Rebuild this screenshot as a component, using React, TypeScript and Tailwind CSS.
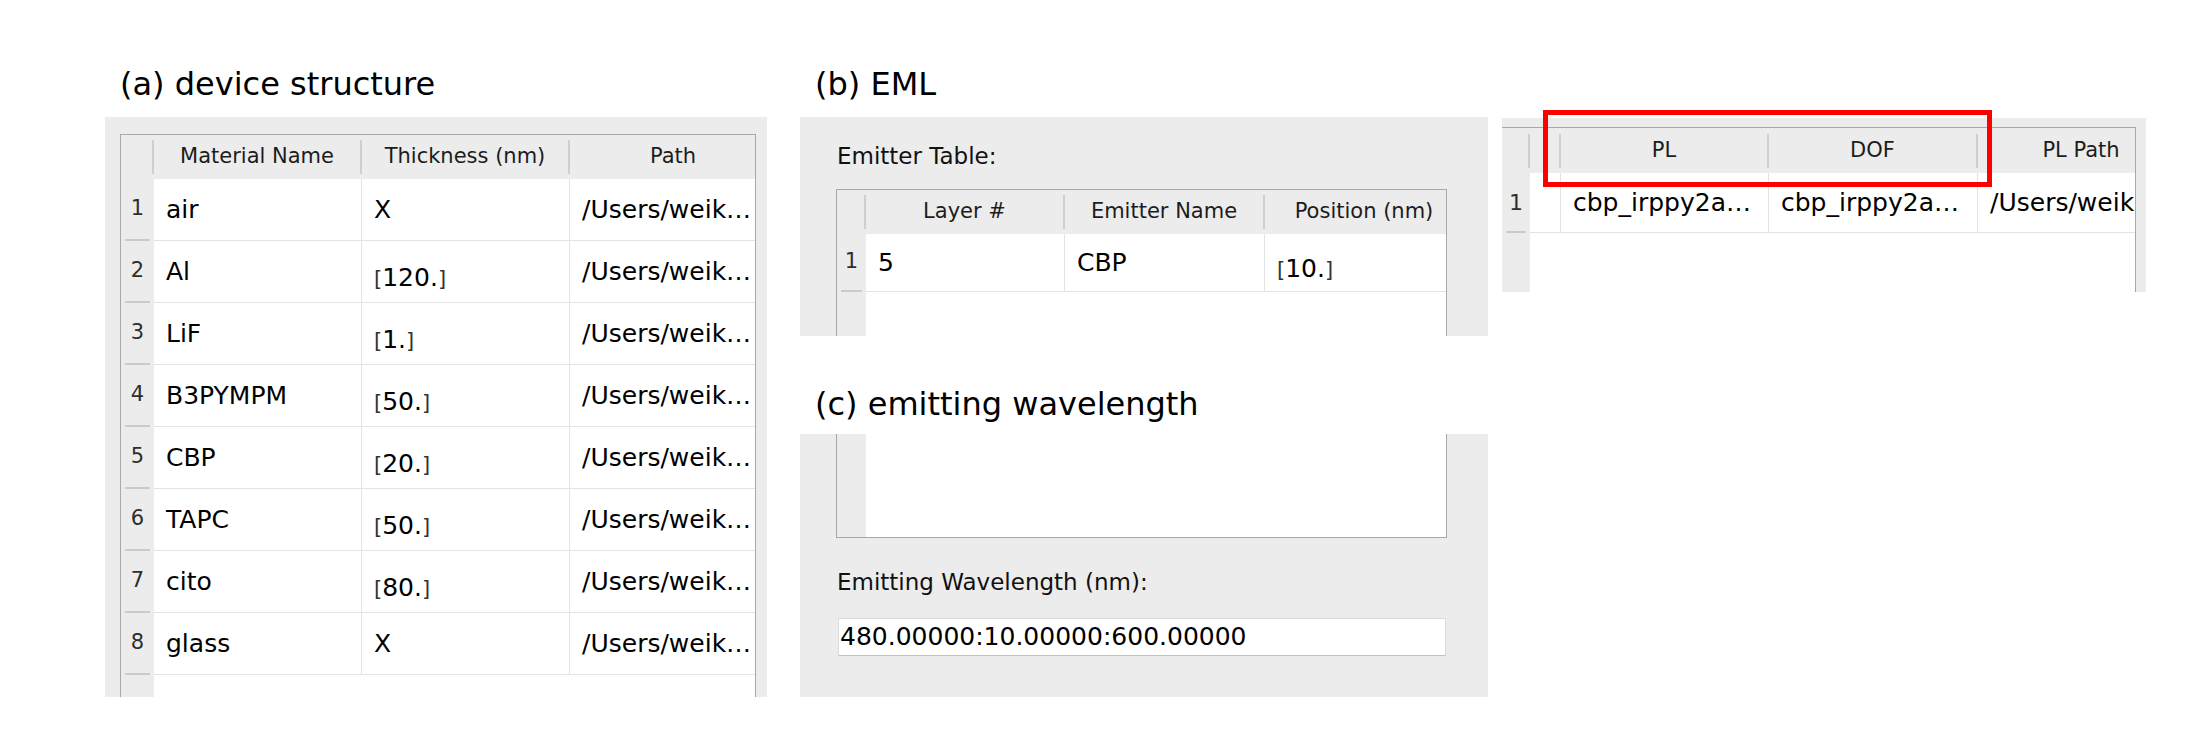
import React from "react";

type Col = { w: string; label: string };
type Cell = { w: string; content: React.ReactNode; cls?: string };

function Header({ numW, cols, h }: { numW: string; cols: Col[]; h: string }) {
  return (
    <div className={`flex shrink-0 bg-[#ececec] ${h}`}>
      <div className={`${numW} shrink-0 flex justify-end items-center`}>
        <div className="w-[2px] h-[34px] bg-[#cfcfcf]" />
      </div>
      {cols.map((c, i) => (
        <div key={i} className={`${c.w} shrink-0 flex items-center`}>
          <div className="flex-1 text-center text-[21px] text-[#1c1c1c] whitespace-nowrap overflow-hidden">
            {c.label}
          </div>
          <div className="w-[2px] h-[34px] bg-[#cfcfcf] shrink-0" />
        </div>
      ))}
    </div>
  );
}

function Row({ numW, n, h, cells, numSize }: { numW: string; n: string; h: string; cells: Cell[]; numSize?: string }) {
  return (
    <div className={`flex shrink-0 ${h}`}>
      <div className={`${numW} shrink-0 flex flex-col bg-[#ececec]`}>
        <div className={`flex-1 flex items-center justify-center ${numSize ?? "text-[21px]"} text-[#2e2e2e]`}>{n}</div>
        <div className="h-[2px] mx-[4px] bg-[#cbcbcb]" />
      </div>
      {cells.map((c, i) => (
        <div
          key={i}
          className={`${c.w} shrink-0 bg-white border-r border-b border-[#e3e3e3] flex items-center pl-[12px] text-[25px] text-black whitespace-nowrap overflow-hidden ${c.cls ?? ""}`}
        >
          {c.content}
        </div>
      ))}
    </div>
  );
}

function Filler({ numW }: { numW: string }) {
  return (
    <div className="flex flex-1 min-h-0">
      <div className={`${numW} shrink-0 bg-[#ececec]`} />
      <div className="flex-1 bg-white" />
    </div>
  );
}

function Br({ v }: { v: string }) {
  return (
    <span>
      <span className="text-[21px] text-[#333333]">[</span>
      {v}
      <span className="text-[21px] text-[#333333]">]</span>
    </span>
  );
}

const layers: [string, string][] = [
  ["air", "X"],
  ["Al", "120."],
  ["LiF", "1."],
  ["B3PYMPM", "50."],
  ["CBP", "20."],
  ["TAPC", "50."],
  ["cito", "80."],
  ["glass", "X"],
];

export default function App() {
  const colsA: Col[] = [
    { w: "w-[208px]", label: "Material Name" },
    { w: "w-[208px]", label: "Thickness (nm)" },
    { w: "w-[208px]", label: "Path" },
  ];
  const colsB: Col[] = [
    { w: "w-[199px]", label: "Layer #" },
    { w: "w-[200px]", label: "Emitter Name" },
    { w: "w-[200px]", label: "Position (nm)" },
  ];
  const colsC: Col[] = [
    { w: "w-[31px]", label: "" },
    { w: "w-[208px]", label: "PL" },
    { w: "w-[209px]", label: "DOF" },
    { w: "w-[208px]", label: "PL Path" },
  ];

  return (
    <div className="w-[2195px] h-[750px] bg-white font-['DejaVu_Sans',sans-serif] flex pl-[105px] pt-[64px] overflow-hidden">
      {/* Column A */}
      <div className="w-[662px] shrink-0 flex flex-col">
        <div className="h-[40px] leading-[40px] pl-[15px] text-[32px] text-black whitespace-nowrap">(a) device structure</div>
        <div className="mt-[13px] h-[580px] bg-[#ececec] flex flex-col pt-[17px] pl-[15px] pr-[11px]">
          <div className="flex-1 min-h-0 flex flex-col border-l border-t border-r border-[#a8a8a8] overflow-hidden">
            <Header numW="w-[33px]" cols={colsA} h="h-[44px]" />
            {layers.map(([name, t], i) => (
              <Row
                key={i}
                numW="w-[33px]"
                n={String(i + 1)}
                h="h-[62px]"
                cells={[
                  { w: "w-[208px]", content: name },
                  { w: "w-[208px]", content: t === "X" ? "X" : <Br v={t} />, cls: t === "X" ? "" : "pt-[12px]" },
                  { w: "w-[208px]", content: "/Users/weik…" },
                ]}
              />
            ))}
            <Filler numW="w-[33px]" />
          </div>
        </div>
      </div>

      {/* Column B */}
      <div className="w-[688px] ml-[33px] shrink-0 flex flex-col">
        <div className="h-[40px] leading-[40px] pl-[15px] text-[32px] text-black whitespace-nowrap">(b) EML</div>
        <div className="mt-[13px] h-[219px] bg-[#ececec] flex flex-col pt-[25px] pl-[36px] pr-[41px]">
          <div className="h-[28px] leading-[28px] pl-px text-[23px] text-[#111111]">Emitter Table:</div>
          <div className="mt-[19px] flex-1 min-h-0 flex flex-col border-l border-t border-r border-[#a8a8a8] overflow-hidden">
            <Header numW="w-[29px]" cols={colsB} h="h-[44px]" />
            <Row
              numW="w-[29px]"
              n="1"
              h="h-[58px]"
              cells={[
                { w: "w-[199px]", content: "5" },
                { w: "w-[200px]", content: "CBP" },
                { w: "w-[200px]", content: <Br v="10." />, cls: "pt-[12px]" },
              ]}
            />
            <Filler numW="w-[29px]" />
          </div>
        </div>

        <div className="mt-[48px] h-[40px] leading-[40px] pl-[15px] text-[32px] text-black whitespace-nowrap">(c) emitting wavelength</div>
        <div className="mt-[10px] h-[263px] bg-[#ececec] flex flex-col pl-[36px] pr-[41px]">
          <div className="h-[104px] shrink-0 flex border-l border-r border-b border-[#a8a8a8]">
            <div className="w-[29px] bg-[#ececec]" />
            <div className="flex-1 bg-white" />
          </div>
          <div className="mt-[30px] h-[28px] leading-[28px] pl-px text-[23px] text-[#111111]">Emitting Wavelength (nm):</div>
          <div className="mt-[22px] ml-[2px] mr-px h-[38px] bg-white border border-[#dadada] border-b-[#c2c2c2] flex items-center pl-px text-[25px] text-black whitespace-nowrap">
            480.00000:10.00000:600.00000
          </div>
        </div>
      </div>

      {/* Column C */}
      <div className="w-[644px] ml-[14px] shrink-0 flex flex-col relative">
        <div className="mt-[54px] h-[174px] bg-[#ececec] flex flex-col pt-[9px] pr-[10px]">
          <div className="flex-1 min-h-0 flex flex-col border-t border-r border-[#a8a8a8] overflow-hidden">
            <Header numW="w-[28px]" cols={colsC} h="h-[45px]" />
            <Row
              numW="w-[28px]"
              n="1"
              h="h-[60px]"
              numSize="text-[22px]"
              cells={[
                { w: "w-[31px]", content: "" },
                { w: "w-[208px]", content: "cbp_irppy2a…" },
                { w: "w-[209px]", content: "cbp_irppy2a…" },
                { w: "w-[208px]", content: "/Users/weik" },
              ]}
            />
            <Filler numW="w-[28px]" />
          </div>
        </div>
        <div className="absolute left-[41px] top-[46px] w-[449px] h-[77px] border-[5px] border-[#ff0000]" />
      </div>
    </div>
  );
}
